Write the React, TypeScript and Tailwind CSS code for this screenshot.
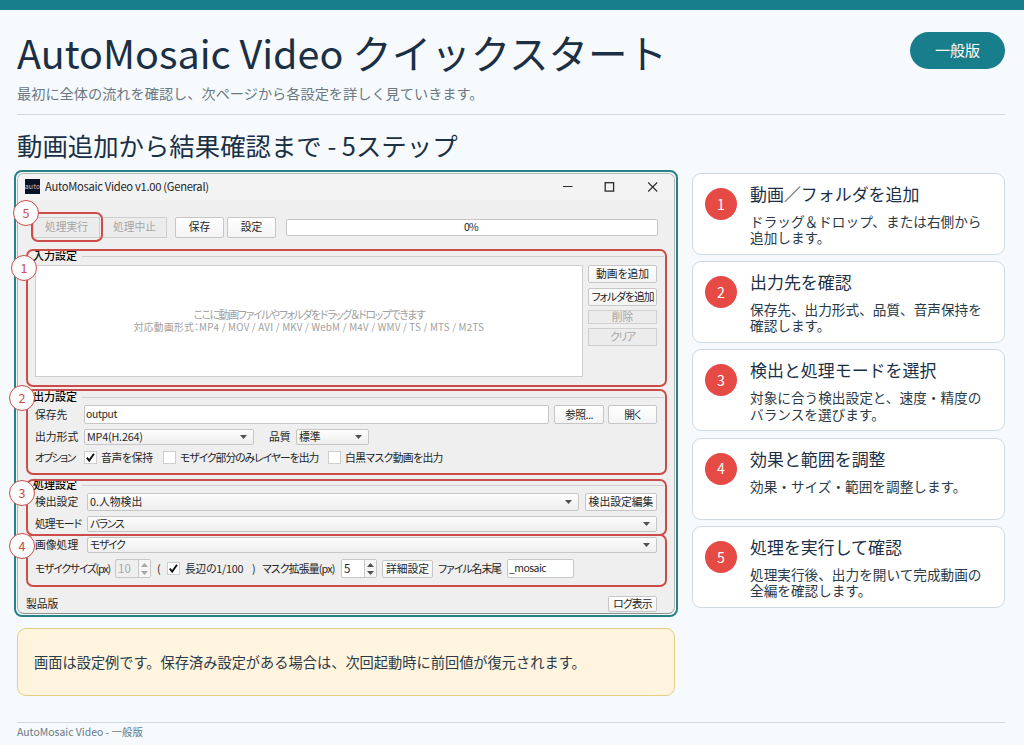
import { ReactNode } from 'react';
import clsx from 'clsx';

interface Step {
  title: string;
  text: string;
}

const STEPS: Step[] = [
  { title: '動画／フォルダを追加', text: 'ドラッグ＆ドロップ、または右側から\n追加します。' },
  { title: '出力先を確認', text: '保存先、出力形式、品質、音声保持を\n確認します。' },
  { title: '検出と処理モードを選択', text: '対象に合う検出設定と、速度・精度の\nバランスを選びます。' },
  { title: '効果と範囲を調整', text: '効果・サイズ・範囲を調整します。' },
  { title: '処理を実行して確認', text: '処理実行後、出力を開いて完成動画の\n全編を確認します。' },
];

// Highlight frames and numbered markers, relative to the window frame
const HIGHLIGHTS = [
  { n: 5, box: 'left-[15px] top-[40px] w-[72px] h-[30px]', dot: 'left-[-3px] top-[28px]' },
  { n: 1, box: 'left-[10px] top-[77px] w-[641px] h-[138px]', dot: 'left-[-5px] top-[83px]' },
  { n: 2, box: 'left-[10px] top-[217px] w-[641px] h-[86px]', dot: 'left-[-7px] top-[213px]' },
  { n: 3, box: 'left-[10px] top-[307px] w-[641px] h-[57px]', dot: 'left-[-7px] top-[308px]' },
  { n: 4, box: 'left-[10px] top-[362px] w-[641px] h-[53px]', dot: 'left-[-7px] top-[361px]' },
];

function Label({ children, className }: { children: ReactNode; className?: string }) {
  return <span className={clsx('shrink-0 pb-[1.5px]', className)}>{children}</span>;
}

function Btn({ children, className, disabled = false }: { children: ReactNode; className?: string; disabled?: boolean }) {
  return (
    <div
      className={clsx(
        'flex shrink-0 items-center justify-center border pb-[1.5px]',
        disabled
          ? 'border-[#cfcfcf] bg-[#ececec] text-[#a6a6a6]'
          : 'rounded-[2px] border-[#c6c6c6] bg-gradient-to-b from-white to-[#f4f4f4]',
        className,
      )}
    >
      {children}
    </div>
  );
}

function Combo({ value, className, valueClass }: { value: string; className?: string; valueClass?: string }) {
  return (
    <div
      className={clsx(
        'flex h-full shrink-0 items-center justify-between rounded-[2px] border border-[#c6c6c6] bg-gradient-to-b from-[#fdfdfd] to-[#eeeeee] pl-[2px] pr-[6px]',
        className,
      )}
    >
      <Label className={valueClass}>{value}</Label>
      <svg width="7" height="4" viewBox="0 0 7 4" fill="#505050"><path d="M0 0h7L3.5 4z" /></svg>
    </div>
  );
}

function Check({ checked = false }: { checked?: boolean }) {
  return (
    <div className="flex h-[13px] w-[13px] shrink-0 items-center justify-center border border-[#cdcdcd] bg-white">
      {checked && (
        <svg className="shrink-0" width="9" height="9" viewBox="0 0 9 9" fill="none" stroke="#111" strokeWidth="1.9">
          <path d="M0.8 4.6L3.2 7.6L8 0.8" />
        </svg>
      )}
    </div>
  );
}

function Spin({ value, disabled = false }: { value: string; disabled?: boolean }) {
  return (
    <div
      className={clsx(
        'flex h-[19px] w-[36px] shrink-0 items-stretch rounded-[2px] border border-[#c6c6c6] text-[11.5px]',
        disabled ? 'bg-[#efefef] text-[#a6a6a6]' : 'bg-white',
      )}
    >
      <span className="flex flex-1 items-center pb-px pl-[2px]">{value}</span>
      <span className="flex w-[12px] items-center justify-center border-l border-[#c6c6c6] bg-[#f5f5f5]">
        <svg width="7" height="12" viewBox="0 0 7 12" fill={disabled ? '#a6a6a6' : '#505050'}>
          <path d="M0 4h7L3.5 0zM0 8h7L3.5 12z" />
        </svg>
      </span>
    </div>
  );
}

function GroupTitle({ children, className }: { children: string; className?: string }) {
  return (
    <div className={clsx('flex h-[12px] items-center pl-[15px] pr-[10px]', className)}>
      <Label className="w-[49px] text-[11px] font-medium text-black">{children}</Label>
      <span className="h-px flex-1 bg-[#cfcfcf]" />
    </div>
  );
}

function AppWindow() {
  return (
    <div className="h-[441px] w-[658px] overflow-hidden rounded-[7px] border border-b-[#8f8f8f] border-[#b4b4b4] bg-[#efefef] text-[10.8px] leading-[12px] whitespace-nowrap text-[#262626] [font-feature-settings:'palt']">
      <div className="flex h-[26px] items-center bg-[#f3f3f3] pl-[7px]">
        <div className="mb-px flex h-[15px] w-[15px] items-center justify-center overflow-hidden bg-[#071226] text-[7px] leading-none font-medium">
          <span className="text-[#7fb8e6]">au</span>
          <span className="text-[#d88890]">to</span>
        </div>
        <Label className="ml-[5px] text-[11.2px] tracking-[-0.29px]">AutoMosaic Video v1.00 (General)</Label>
        <svg className="ml-auto mr-[16px]" width="95" height="10" viewBox="0 0 95 10" fill="none" stroke="#2b2b2b">
          <path d="M0 4.5h9.5" strokeWidth="1" />
          <rect x="42.2" y="0.7" width="8.4" height="8.4" strokeWidth="1.3" />
          <path d="M85.2 0.5l9 9M94.2 0.5l-9 9" strokeWidth="1.1" />
        </svg>
      </div>

      <div className="mt-[16px] flex h-[22px] items-center pl-[15px]">
        <Btn disabled className="h-[21px] w-[67px]">処理実行</Btn>
        <Btn disabled className="ml-[2px] h-[21px] w-[65px]">処理中止</Btn>
        <Btn className="ml-[8px] h-[21px] w-[49px]">保存</Btn>
        <Btn className="ml-[3px] h-[21px] w-[49px]">設定</Btn>
        <div className="ml-[10px] flex h-[17px] w-[372px] items-center justify-center rounded-[2px] border border-[#c6c6c6] bg-white pr-[2px] pb-px text-[10.5px] tracking-[-0.8px]">
          0%
        </div>
      </div>

      <GroupTitle className="mt-[12px]">入力設定</GroupTitle>
      <div className="mt-[3px] flex h-[112px] pl-[17px]">
        <div className="flex w-[548px] flex-col items-center justify-center border border-[#cdcdcd] bg-white pb-[2px] text-[#a0a0a0]">
          <span className="text-[10.9px] leading-[14px] tracking-[-1.37px]">ここに動画ファイルやフォルダをドラッグ＆ドロップできます</span>
          <span className="text-[9.8px] leading-[13px] tracking-[0.21px]">対応動画形式：MP4 / MOV / AVI / MKV / WebM / M4V / WMV / TS / MTS / M2TS</span>
        </div>
        <div className="ml-[5px] flex w-[69px] flex-col">
          <Btn className="h-[18px]">動画を追加</Btn>
          <Btn className="mt-[5px] h-[18px] tracking-[-1px]">フォルダを追加</Btn>
          <Btn disabled className="mt-[4px] h-[14px]">削除</Btn>
          <Btn disabled className="mt-[4px] h-[18px] tracking-[-1.2px]">クリア</Btn>
        </div>
      </div>

      <GroupTitle className="mt-[14px]">出力設定</GroupTitle>
      <div className="mt-[2px] flex h-[19px] items-center pl-[17px]">
        <Label className="w-[49px]">保存先</Label>
        <div className="flex h-[19px] w-[465px] items-center rounded-[2px] border border-[#c6c6c6] bg-white pb-px pl-[1px] text-[10.4px] tracking-[-0.35px]">output</div>
        <Btn className="ml-[5px] h-[19px] w-[50px] tracking-[-0.5px]">参照...</Btn>
        <Btn className="ml-[4px] h-[19px] w-[49px] tracking-[-0.8px]">開く</Btn>
      </div>
      <div className="mt-[5px] flex h-[16px] items-center pl-[17px]">
        <Label className="w-[49px]">出力形式</Label>
        <Combo value="MP4(H.264)" className="w-[170px]" valueClass="tracking-[-0.2px]" />
        <Label className="ml-[15px] w-[27px]">品質</Label>
        <Combo value="標準" className="w-[73px]" />
      </div>
      <div className="mt-[6px] flex h-[13px] items-center pl-[17px]">
        <Label className="w-[49px] tracking-[-1.6px]">オプション</Label>
        <Check checked />
        <Label className="ml-[4px] w-[62px] tracking-[-0.3px]">音声を保持</Label>
        <Check />
        <Label className="ml-[4px] w-[148px] tracking-[-1px]">モザイク部分のみレイヤーを出力</Label>
        <Check />
        <Label className="ml-[4px] tracking-[-0.6px]">白黒マスク動画を出力</Label>
      </div>

      <GroupTitle className="mt-[15px]">処理設定</GroupTitle>
      <div className="mt-[2px] flex h-[18px] items-center pl-[17px]">
        <Label className="w-[52px]">検出設定</Label>
        <Combo value="0.人物検出" className="w-[492px]" />
        <Btn className="ml-[6px] h-[18px] w-[72px]">検出設定編集</Btn>
      </div>
      <div className="mt-[5px] flex h-[16px] items-center pl-[17px]">
        <Label className="w-[52px] tracking-[-1px]">処理モード</Label>
        <Combo value="バランス" className="w-[570px]" valueClass="tracking-[-1.3px]" />
      </div>
      <div className="mt-[5px] flex h-[16px] items-center pl-[17px]">
        <Label className="w-[52px]">画像処理</Label>
        <Combo value="モザイク" className="w-[570px]" valueClass="tracking-[-1.3px]" />
      </div>
      <div className="mt-[6px] flex h-[19px] items-center pl-[17px]">
        <Label className="w-[80px] tracking-[-1.2px]">モザイクサイズ(px)</Label>
        <Spin value="10" disabled />
        <Label className="ml-[6px] w-[10px]">(</Label>
        <Check checked />
        <Label className="ml-[5px] w-[67px] tracking-[-0.25px]">長辺の1/100</Label>
        <Label className="w-[10px]">)</Label>
        <Label className="w-[79px] tracking-[-0.8px]">マスク拡張量(px)</Label>
        <Spin value="5" />
        <Btn className="ml-[5px] h-[18px] w-[51px]">詳細設定</Btn>
        <Label className="ml-[5px] w-[69px] tracking-[-0.95px]">ファイル名末尾</Label>
        <div className="flex h-[19px] w-[67px] items-center rounded-[2px] border border-[#c6c6c6] bg-white pb-px pl-[1px] text-[10.4px] tracking-[-0.5px]">_mosaic</div>
      </div>

      <div className="mt-[18px] flex h-[16px] items-center justify-between pr-[17px] pl-[8px]">
        <Label>製品版</Label>
        <Btn className="h-[16px] w-[49px] tracking-[-0.8px]">ログ表示</Btn>
      </div>
    </div>
  );
}

function StepCard({ step, index }: { step: Step; index: number }) {
  return (
    <li className="flex h-[82px] rounded-[9px] border-[1.5px] border-[#d0dae2] bg-white pl-[12px]">
      <div className="mt-[14px] flex h-[32px] w-[32px] shrink-0 items-center justify-center rounded-full bg-[#e54a45] text-[14.2px] leading-none text-white">
        {index + 1}
      </div>
      <div className="ml-[13px]">
        <h3 className="mt-[10px] text-[16.95px] leading-[20px] whitespace-nowrap text-[#1b2f45]">{step.title}</h3>
        <p className="mt-[9px] text-[13.65px] leading-[16.3px] whitespace-pre text-[#2a3a48]">{step.text}</p>
      </div>
    </li>
  );
}

export default function App() {
  return (
    <div className="flex h-[745px] w-[1024px] flex-col overflow-hidden bg-[#f6fafd] font-['Noto_Sans_CJK_JP',sans-serif] text-[#1b2f45]">
      <div className="h-[10px] shrink-0 bg-[#187e8b]" />

      <header className="mx-[17px] flex h-[105px] w-[988px] shrink-0 justify-between border-b border-[#d0dae2]">
        <div className="whitespace-nowrap">
          <h1 className="mt-[22px] text-[39.5px] leading-[40px]">AutoMosaic Video クイックスタート</h1>
          <p className="mt-[13px] text-[14.2px] leading-[16px] text-[#6a7883]">
            最初に全体の流れを確認し、次ページから各設定を詳しく見ていきます。
          </p>
        </div>
        <div className="mt-[22px] flex h-[37px] w-[95px] items-center justify-center rounded-full bg-[#187e8b] pb-[2px] text-[15px] leading-none text-white">
          一般版
        </div>
      </header>

      <h2 className="mt-[16px] ml-[17px] shrink-0 text-[25.4px] leading-[28px]">動画追加から結果確認まで - 5ステップ</h2>

      <main className="mt-[11px] flex h-[527px] shrink-0 pl-[14px]">
        <div className="w-[664px] shrink-0">
          <div className="relative h-[447px] rounded-[8px] border-2 border-[#2b7f88] bg-[#effafb] p-px">
            <AppWindow />
            {HIGHLIGHTS.map((h) => (
              <div key={`box-${h.n}`} className={clsx('absolute rounded-[7px] border-2 border-[#cb4d49]', h.box)} />
            ))}
            {HIGHLIGHTS.map((h) => (
              <div
                key={`dot-${h.n}`}
                className={clsx(
                  'absolute flex h-[26px] w-[26px] items-center justify-center rounded-full border-[1.5px] border-[#cb4d49] bg-[#fdfdfd] text-[12.5px] leading-none text-[#cb4d49]',
                  h.dot,
                )}
              >
                {h.n}
              </div>
            ))}
          </div>
          <div className="mt-[11px] ml-[3px] flex h-[68px] w-[658px] items-center rounded-[9px] border-[1.5px] border-[#e2cf84] bg-[#fff4dd] pl-[16px] text-[14.22px] leading-none text-[#2a3a48]">
            画面は設定例です。保存済み設定がある場合は、次回起動時に前回値が復元されます。
          </div>
        </div>

        <ol className="mt-[3px] ml-[14px] flex w-[313px] flex-col gap-[6.2px]">
          {STEPS.map((step, i) => (
            <StepCard key={step.title} step={step} index={i} />
          ))}
        </ol>
      </main>

      <footer className="mx-[17px] mt-[25px] w-[988px] border-t border-[#d0dae2] pt-px text-[10.45px] leading-[16px] text-[#6a7883]">
        AutoMosaic Video - 一般版
      </footer>
    </div>
  );
}
